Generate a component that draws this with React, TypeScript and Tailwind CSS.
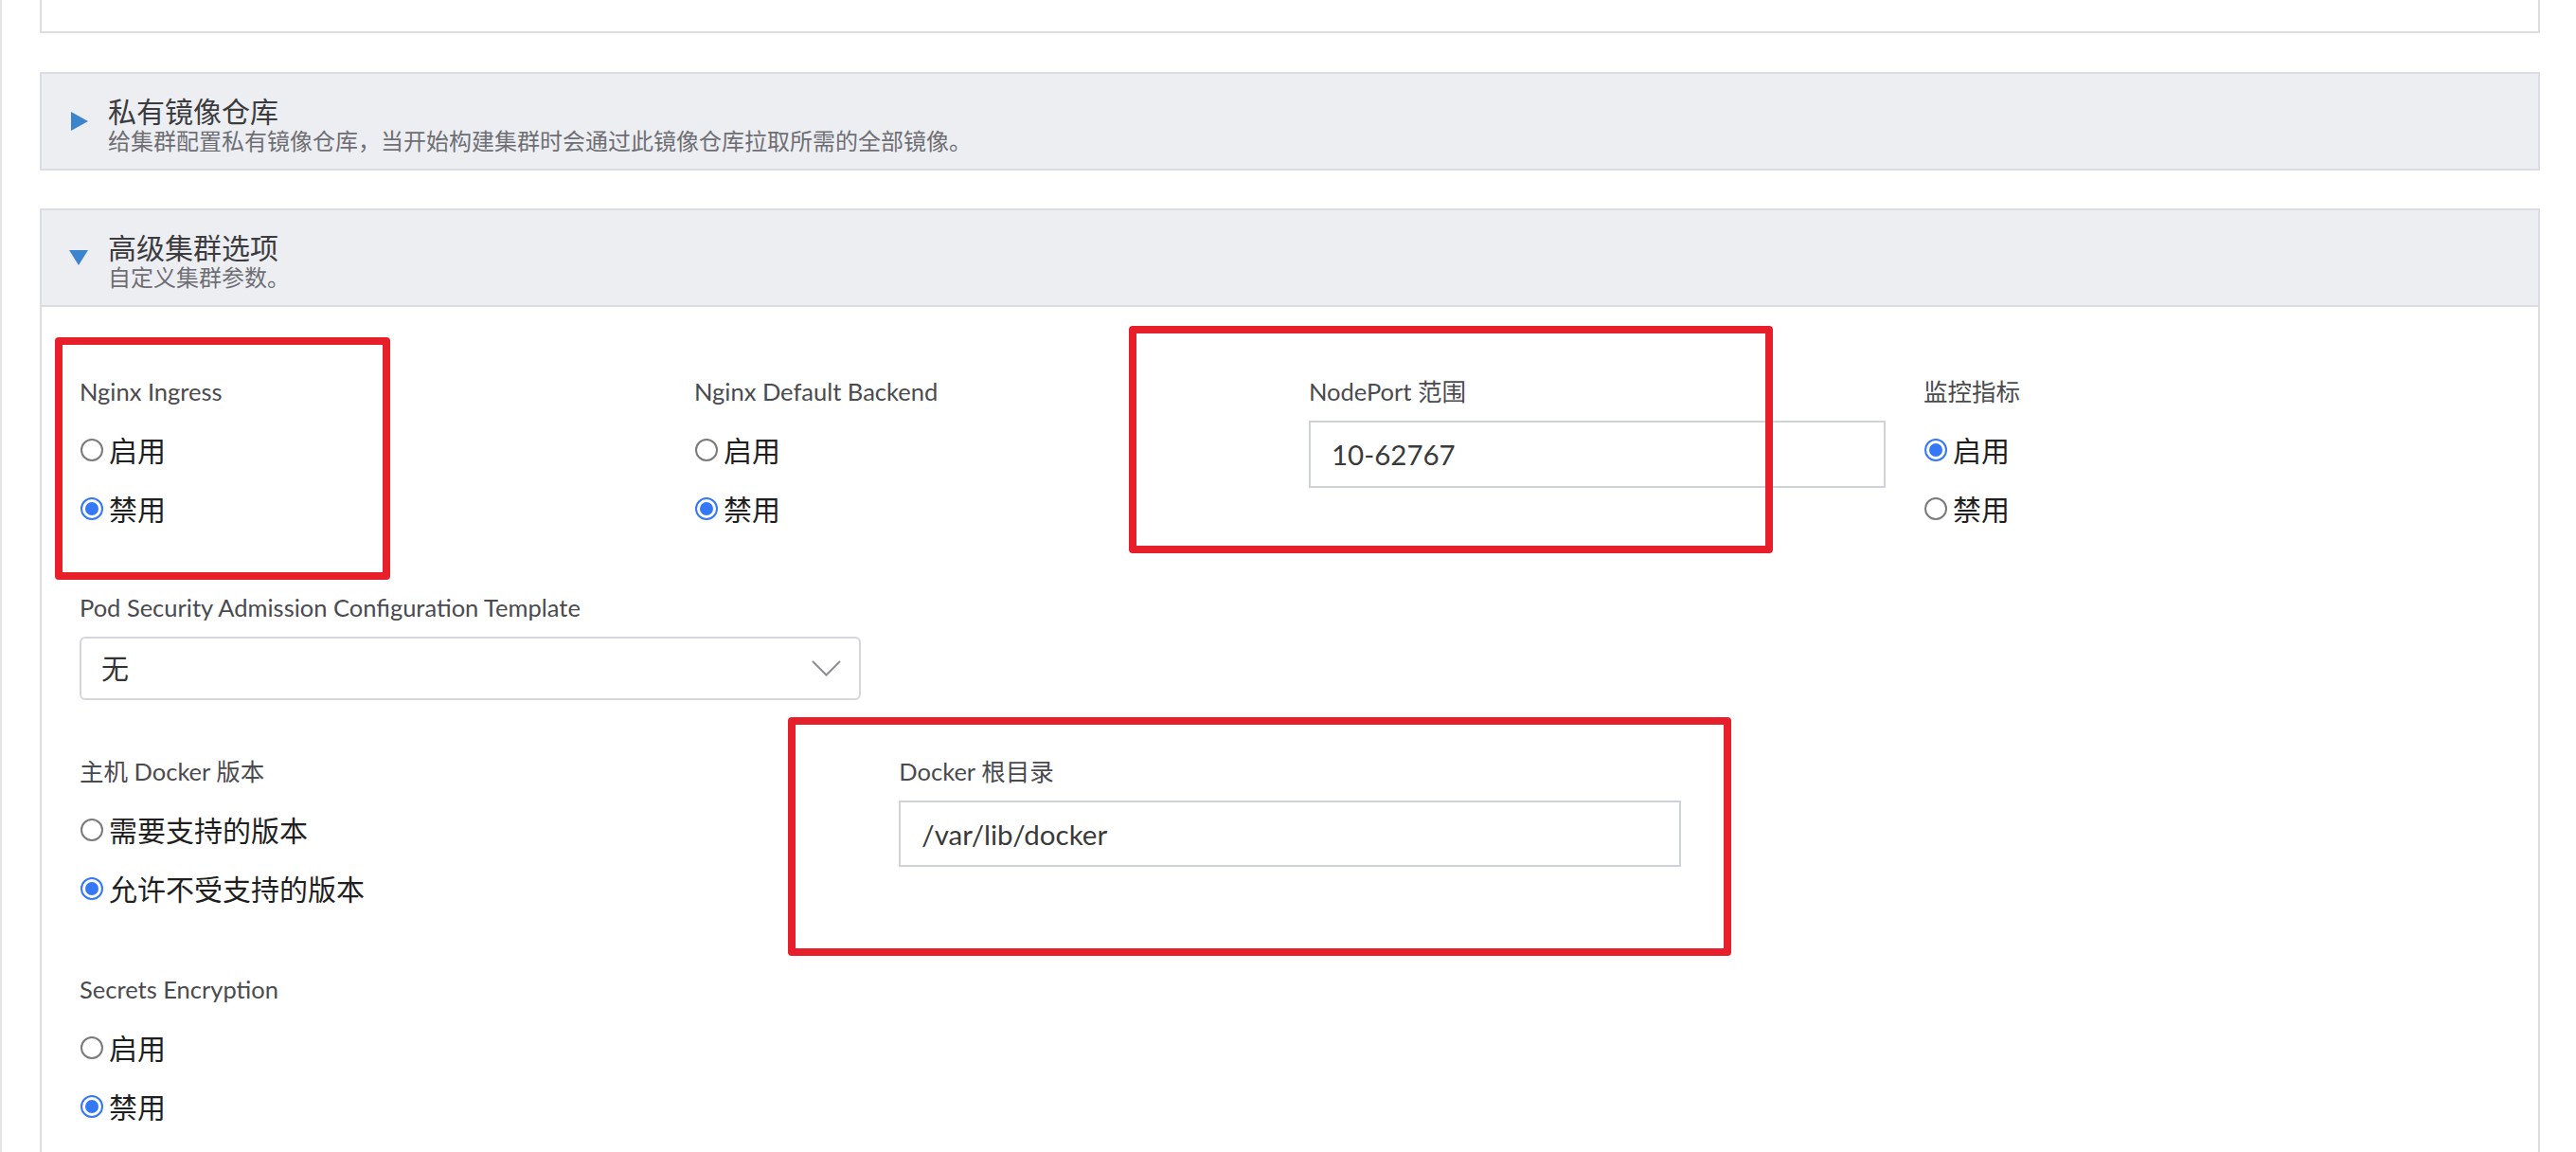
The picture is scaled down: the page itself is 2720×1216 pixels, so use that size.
import React from 'react';

const RED_BOX = 'absolute border-[8px] border-[#e71f2a] rounded-[4px] pointer-events-none z-10';

const Radio: React.FC<{ label: string; checked?: boolean }> = ({ label, checked }) => (
  <div className="h-[62px] flex items-center">
    {checked ? (
      <span className="w-[24px] h-[24px] ml-[1px] rounded-full border-2 border-[#3478f6] flex items-center justify-center">
        <span className="w-[14px] h-[14px] rounded-full bg-[#3478f6]" />
      </span>
    ) : (
      <span className="w-[24px] h-[24px] ml-[1px] rounded-full border-2 border-[#7a7a7a]" />
    )}
    <span className="ml-[6px] text-[30px] leading-[40px] text-[#1f1f1f]">{label}</span>
  </div>
);

const Label: React.FC<{ children: React.ReactNode }> = ({ children }) => (
  <div className="text-[25.5px] leading-[32px] text-[#4a4a4f] mb-[15px]">{children}</div>
);

const TextInput: React.FC<{ value: string; height: string }> = ({ value, height }) => (
  <input
    readOnly
    defaultValue={value}
    className={`w-full ${height} border-2 border-[#cfd1db] bg-white pl-[22px] text-[29.5px] text-[#3a3a3a] outline-none`}
  />
);

const SectionHeader: React.FC<{ title: string; desc: string; open?: boolean }> = ({ title, desc, open }) => (
  <div className="h-[104px] border-2 border-[#dcdde3] bg-[#edeef2] flex items-center pl-[29px]">
    <svg width="20" height="20" viewBox="0 0 20 20" className="shrink-0">
      {open ? <polygon points="0,2 20,2 10,18" fill="#3d84cf" /> : <polygon points="2,0 20,10 2,20" fill="#3d84cf" />}
    </svg>
    <div className="ml-[21px] pt-[8px]">
      <div className="text-[30px] leading-[34px] text-[#3c3c3f]">{title}</div>
      <div className="text-[24px] leading-[30px] text-[#6e6e74]">{desc}</div>
    </div>
  </div>
);

export default function App() {
  return (
    <div className="w-[2720px] h-[1216px] overflow-hidden bg-white border-l-2 border-[#e4e5e9] font-['Lato','Noto_Sans_CJK_SC',sans-serif]">
      <div className="pl-[40px] pr-[38px]">
        {/* previous card, cut at the top */}
        <div className="h-[35px] border-x-2 border-b-2 border-[#dcdde3] bg-white" />

        <div className="mt-[41px]">
          <SectionHeader
            title="私有镜像仓库"
            desc="给集群配置私有镜像仓库，当开始构建集群时会通过此镜像仓库拉取所需的全部镜像。"
          />
        </div>

        <div className="mt-[40px]">
          <SectionHeader title="高级集群选项" desc="自定义集群参数。" open />
          <div className="h-[900px] border-x-2 border-[#dcdde3] bg-white pl-[40px] pt-[73px]">
            {/* row 1 */}
            <div className="grid grid-cols-4">
              <div className="relative pr-[40px]">
                <div className={`${RED_BOX} left-[-26px] top-[-41px] w-[354px] h-[256px]`} />
                <Label>Nginx Ingress</Label>
                <Radio label="启用" />
                <Radio label="禁用" checked />
              </div>
              <div className="pr-[40px]">
                <Label>Nginx Default Backend</Label>
                <Radio label="启用" />
                <Radio label="禁用" checked />
              </div>
              <div className="relative pr-[40px]">
                <div className={`${RED_BOX} left-[-190px] top-[-53px] w-[680px] h-[240px]`} />
                <Label>NodePort 范围</Label>
                <TextInput value="10-62767" height="h-[71px]" />
              </div>
              <div className="pr-[40px]">
                <Label>监控指标</Label>
                <Radio label="启用" checked />
                <Radio label="禁用" />
              </div>
            </div>

            {/* row 2 */}
            <div className="grid grid-cols-3 mt-[57px]">
              <div className="pr-[40px]">
                <Label>Pod Security Admission Configuration Template</Label>
                <div className="h-[67px] border-2 border-[#d5d6db] rounded-[6px] bg-white flex items-center justify-between pl-[21px] pr-[19px]">
                  <span className="text-[29px] text-[#333]">无</span>
                  <svg width="31" height="17" viewBox="0 0 31 17">
                    <polyline points="1,1 15.5,15.5 30,1" fill="none" stroke="#8e8e93" strokeWidth="2" />
                  </svg>
                </div>
              </div>
            </div>

            {/* row 3 */}
            <div className="grid grid-cols-3 mt-[59px]">
              <div className="pr-[40px]">
                <Label>主机 Docker 版本</Label>
                <Radio label="需要支持的版本" />
                <Radio label="允许不受支持的版本" checked />
              </div>
              <div className="relative pr-[40px]">
                <div className={`${RED_BOX} left-[-117px] top-[-41px] w-[996px] h-[252px]`} />
                <Label>Docker 根目录</Label>
                <TextInput value="/var/lib/docker" height="h-[70px]" />
              </div>
            </div>

            {/* row 4 */}
            <div className="grid grid-cols-3 mt-[59px]">
              <div className="pr-[40px]">
                <Label>Secrets Encryption</Label>
                <Radio label="启用" />
                <Radio label="禁用" checked />
              </div>
            </div>
          </div>
        </div>
      </div>
    </div>
  );
}
